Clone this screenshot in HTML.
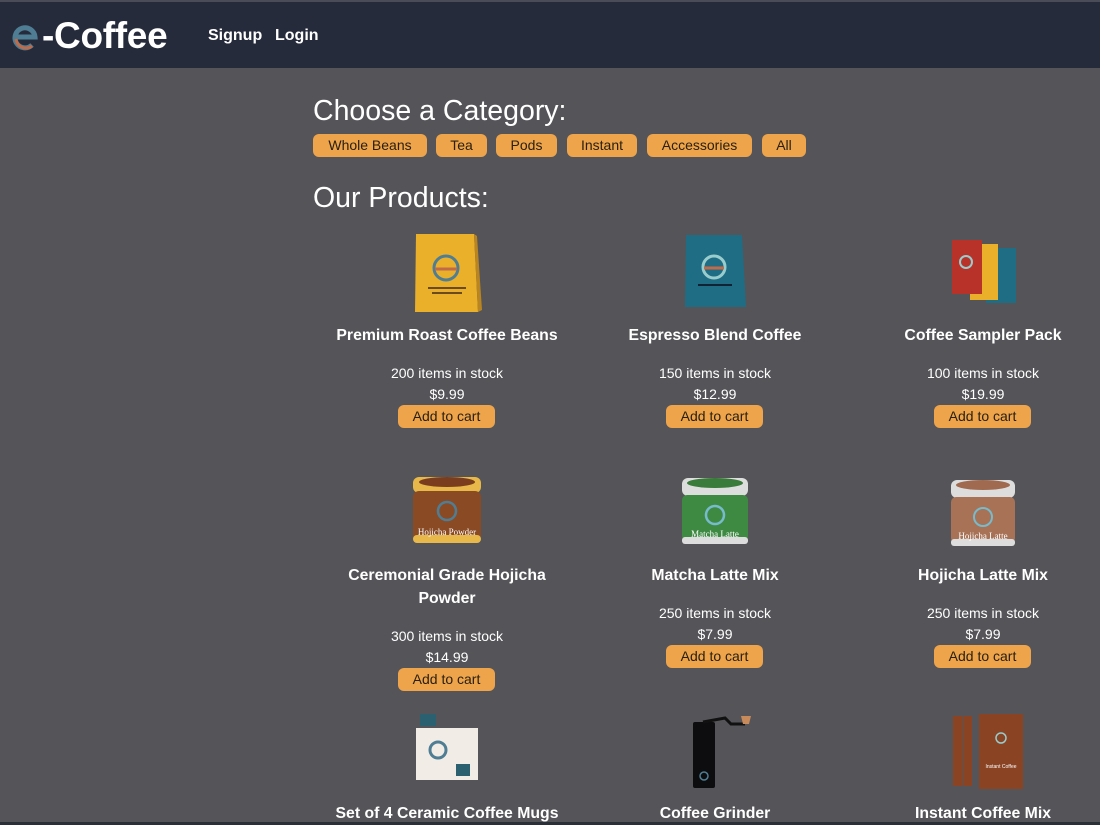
<!DOCTYPE html>
<html><head><meta charset="utf-8"><style>
*{margin:0;padding:0;box-sizing:border-box}
html,body{width:1100px;height:825px;overflow:hidden;background:#555458;font-family:"Liberation Sans",Arial,sans-serif;color:#fff}
.hdr{position:absolute;left:0;top:0;width:1100px;height:68px;background:#262b3c;border-top:2px solid #4a4d58}
.logo{position:absolute;left:10px;top:13px;font-size:37px;font-weight:bold;color:#fff;letter-spacing:-0.3px;white-space:nowrap}
.nav{position:absolute;top:25px;font-size:16px;font-weight:bold}
h2{position:absolute;left:313px;font-weight:normal;font-size:28.5px;color:#fff}
.cat{position:absolute;top:134px;height:23px;background:#eea44b;border-radius:6px;color:#2a2010;font-size:14px;text-align:center;line-height:23px}
.card{position:absolute;width:268px;text-align:center}
.card svg{display:block;margin:0 auto}
.t{font-size:15.8px;font-weight:bold;line-height:23px;position:absolute;left:0;width:268px;top:0}
.s{font-size:14px;position:absolute;left:0;width:268px;line-height:21px}
.b{position:absolute;left:85px;width:97px;height:23px;background:#eea44b;border-radius:6px;color:#2a2010;font-size:14px;line-height:23px}
.bot{position:absolute;left:0;top:822px;width:1100px;height:3px;background:#2a3038}
</style></head><body>
<div class="hdr">
<div class="logo"><svg width="30" height="30" viewBox="0 0 30 30" style="vertical-align:-3px;margin-right:2px"><path d="M5 16 H25 A10 10 0 1 0 22 24" fill="none" stroke="#4f7e94" stroke-width="5"/><path d="M6 18 A10 10 0 0 0 22 25" fill="none" stroke="#c06a4a" stroke-width="3"/></svg>-Coffee</div>
<div class="nav" style="left:208px">Signup</div>
<div class="nav" style="left:275px">Login</div>
</div>
<h2 style="top:95px">Choose a Category:</h2>
<div class="cat" style="left:313px;width:114px">Whole Beans</div>
<div class="cat" style="left:436px;width:51px">Tea</div>
<div class="cat" style="left:496px;width:61px">Pods</div>
<div class="cat" style="left:567px;width:70px">Instant</div>
<div class="cat" style="left:647px;width:105px">Accessories</div>
<div class="cat" style="left:762px;width:44px">All</div>
<h2 style="top:182px">Our Products:</h2>

<div class="card" style="left:313px;top:232px">
<svg width="70" height="82" viewBox="0 0 70 82"><path d="M4 2 H62 L66 80 H3 Z" fill="#eab02a"/><path d="M62 2 L66 80 L70 78 L65 4Z" fill="#b98520"/><circle cx="34" cy="36" r="12" fill="none" stroke="#4f7e94" stroke-width="3"/><path d="M23 37 H45" stroke="#c06a4a" stroke-width="3"/><rect x="16" y="55" width="38" height="2" fill="#6a4a20"/><rect x="20" y="60" width="30" height="2" fill="#6a4a20"/></svg>
<div class="t" style="top:92px">Premium Roast Coffee Beans</div>
<div class="s" style="top:131px">200 items in stock</div>
<div class="s" style="top:152px">$9.99</div>
<div class="b" style="top:173px">Add to cart</div>
</div>
<div class="card" style="left:581px;top:232px">
<svg width="66" height="78" viewBox="0 0 66 78"><path d="M4 3 H60 L64 75 H3 Z" fill="#1f6d84"/><circle cx="32" cy="35" r="11" fill="none" stroke="#9cc" stroke-width="3"/><path d="M22 36 H42" stroke="#c06a4a" stroke-width="3"/><rect x="16" y="52" width="34" height="2" fill="#123"/></svg>
<div class="t" style="top:92px">Espresso Blend Coffee</div>
<div class="s" style="top:131px">150 items in stock</div>
<div class="s" style="top:152px">$12.99</div>
<div class="b" style="top:173px">Add to cart</div>
</div>
<div class="card" style="left:849px;top:232px">
<svg width="70" height="76" viewBox="0 0 70 76"><rect x="38" y="16" width="30" height="55" fill="#1f6d84"/><rect x="22" y="12" width="28" height="56" fill="#eab02a"/><rect x="4" y="8" width="30" height="54" fill="#b8322a"/><circle cx="18" cy="30" r="6" fill="none" stroke="#9cc" stroke-width="2"/></svg>
<div class="t" style="top:92px">Coffee Sampler Pack</div>
<div class="s" style="top:131px">100 items in stock</div>
<div class="s" style="top:152px">$19.99</div>
<div class="b" style="top:173px">Add to cart</div>
</div>

<div class="card" style="left:313px;top:475px">
<svg width="72" height="72" viewBox="0 0 72 72"><rect x="2" y="2" width="68" height="16" rx="6" fill="#e8b84a"/><ellipse cx="36" cy="7" rx="28" ry="5" fill="#7a3e1e"/><rect x="2" y="16" width="68" height="50" rx="6" fill="#8a4a24"/><rect x="2" y="60" width="68" height="8" rx="4" fill="#e8b84a"/><circle cx="36" cy="36" r="9" fill="none" stroke="#4f7e94" stroke-width="2.5"/><text x="36" y="60" font-size="9" fill="#fff" text-anchor="middle" font-family="Liberation Serif">Hojicha Powder</text></svg>
<div class="t" style="top:89px">Ceremonial Grade Hojicha<br>Powder</div>
<div class="s" style="top:151px">300 items in stock</div>
<div class="s" style="top:172px">$14.99</div>
<div class="b" style="top:193px">Add to cart</div>
</div>
<div class="card" style="left:581px;top:475px">
<svg width="70" height="72" viewBox="0 0 70 72"><rect x="2" y="3" width="66" height="18" rx="6" fill="#ddd"/><ellipse cx="35" cy="8" rx="28" ry="5" fill="#3a7a3a"/><rect x="2" y="20" width="66" height="46" rx="5" fill="#3f8a42"/><rect x="2" y="62" width="66" height="7" rx="3" fill="#ddd"/><circle cx="35" cy="40" r="9" fill="none" stroke="#7bc" stroke-width="2.5"/><text x="35" y="62" font-size="9" fill="#fff" text-anchor="middle" font-family="Liberation Serif">Matcha Latte</text></svg>
<div class="t" style="top:89px">Matcha Latte Mix</div>
<div class="s" style="top:128px">250 items in stock</div>
<div class="s" style="top:149px">$7.99</div>
<div class="b" style="top:170px">Add to cart</div>
</div>
<div class="card" style="left:849px;top:475px">
<svg width="68" height="74" viewBox="0 0 68 74"><rect x="2" y="5" width="64" height="18" rx="6" fill="#ddd"/><ellipse cx="34" cy="10" rx="27" ry="5" fill="#a06a50"/><rect x="2" y="22" width="64" height="46" rx="5" fill="#a77256"/><rect x="2" y="64" width="64" height="7" rx="3" fill="#ddd"/><circle cx="34" cy="42" r="9" fill="none" stroke="#7bc" stroke-width="2"/><text x="34" y="64" font-size="9" fill="#fff" text-anchor="middle" font-family="Liberation Serif">Hojicha Latte</text></svg>
<div class="t" style="top:89px">Hojicha Latte Mix</div>
<div class="s" style="top:128px">250 items in stock</div>
<div class="s" style="top:149px">$7.99</div>
<div class="b" style="top:170px">Add to cart</div>
</div>

<div class="card" style="left:313px;top:712px">
<svg width="70" height="70" viewBox="0 0 70 70"><rect x="8" y="2" width="16" height="12" fill="#2a6070"/><rect x="4" y="16" width="62" height="52" fill="#f2ece6"/><circle cx="26" cy="38" r="8" fill="none" stroke="#4f7e94" stroke-width="3"/><rect x="44" y="52" width="14" height="12" fill="#2a6070"/></svg>
<div class="t" style="top:90px">Set of 4 Ceramic Coffee Mugs</div>
</div>
<div class="card" style="left:581px;top:712px">
<svg width="80" height="78" viewBox="0 0 80 78"><rect x="18" y="10" width="22" height="66" rx="2" fill="#0d0d0f"/><path d="M28 10 L50 6 L56 12 L70 12" stroke="#111" stroke-width="3" fill="none"/><path d="M66 4 h10 l-2 8 h-6z" fill="#c78a5a"/><circle cx="29" cy="64" r="4" fill="none" stroke="#4f7e94" stroke-width="1.5"/></svg>
<div class="t" style="top:90px">Coffee Grinder</div>
</div>
<div class="card" style="left:849px;top:712px">
<svg width="80" height="78" viewBox="0 0 80 78"><rect x="10" y="4" width="9" height="70" fill="#8a4424"/><rect x="20" y="4" width="9" height="70" fill="#8a4424"/><rect x="36" y="2" width="44" height="75" fill="#8a4424"/><circle cx="58" cy="26" r="5" fill="none" stroke="#9cc" stroke-width="1.5"/><text x="58" y="56" font-size="5" fill="#fff" text-anchor="middle">Instant Coffee</text></svg>
<div class="t" style="top:90px">Instant Coffee Mix</div>
</div>
<div class="bot"></div>
</body></html>
